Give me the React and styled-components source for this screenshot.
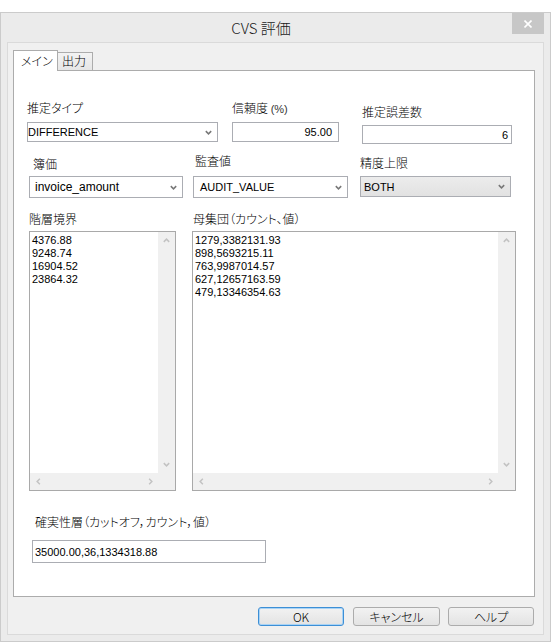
import React from 'react';
import styled, { createGlobalStyle } from 'styled-components';

const jp = `"Noto Sans CJK JP", "Liberation Sans", sans-serif`;
const latin = `"Liberation Sans", "Noto Sans CJK JP", sans-serif`;

const Global = createGlobalStyle`
  html, body { margin: 0; padding: 0; background: #ffffff; }
  body { font-family: ${latin}; color: #000; }
  * { box-sizing: border-box; }
`;

const Window = styled.div`
  margin-top: 12px;
  width: 551px;
  height: 630px;
  border: 1px solid #cbcbcb;
  background: #ebebeb;
  display: flex;
  flex-direction: column;
`;

const TitleBar = styled.div`
  height: 29px;
  display: flex;
  align-items: flex-start;
`;

const Title = styled.div`
  flex: 1;
  padding-left: 9px;
  text-align: center;
  font-family: ${jp};
  font-size: 15px;
  font-weight: 300;
  line-height: 29px;
  color: #1a1a1a;
`;

const CloseButton = styled.div`
  width: 32px;
  height: 21px;
  margin-right: 6px;
  background: #c7c7c7;
  display: flex;
  align-items: center;
  justify-content: center;
`;

const Client = styled.div`
  margin: 0 6px;
  height: 593px;
  border: 1px solid #dadada;
  background: #f0f0f0;
  padding: 7px 0 8px 5px;
  display: flex;
  flex-direction: column;
`;

const TabStrip = styled.div`
  display: flex;
  align-items: flex-end;
  height: 20px;
`;

const Tab = styled.div`
  position: relative;
  z-index: ${(p) => (p.$active ? 1 : 0)};
  width: ${(p) => p.$w}px;
  height: ${(p) => (p.$active ? 21 : 18)}px;
  margin-bottom: ${(p) => (p.$active ? -1 : 0)}px;
  margin-left: ${(p) => (p.$active ? 0 : -1)}px;
  border: 1px solid #acacac;
  border-bottom: none;
  background: ${(p) => (p.$active ? '#ffffff' : 'linear-gradient(#f3f3f3, #e6e6e6)')};
  font-family: ${jp};
  font-size: 12px;
  font-weight: 300;
  font-feature-settings: "palt";
  line-height: ${(p) => (p.$active ? 19 : 16)}px;
  padding-left: ${(p) => p.$pl}px;
  white-space: nowrap;
`;

const Pane = styled.div`
  width: 522px;
  height: 527px;
  border: 1px solid #acacac;
  background: #ffffff;
  padding-top: 29px;
  display: flex;
  flex-direction: column;
`;

const Row = styled.div`
  display: flex;
  align-items: flex-start;
  margin-top: ${(p) => p.$mt || 0}px;
`;

const Field = styled.div`
  display: flex;
  flex-direction: column;
  width: ${(p) => p.$w}px;
  margin-left: ${(p) => p.$ml}px;
  margin-top: ${(p) => p.$mt || 0}px;
`;

const Label = styled.div`
  height: 16px;
  line-height: 16px;
  padding-left: ${(p) => p.$dx || 0}px;
  margin-bottom: ${(p) => p.$gap}px;
  font-family: ${jp};
  font-size: 12px;
  font-weight: 300;
  font-feature-settings: "palt";
  white-space: nowrap;
`;

const Small = styled.span`
  font-family: ${latin};
  font-size: 11px;
  font-weight: 400;
  color: #333;
`;

const SelectBox = styled.div`
  height: ${(p) => p.$h}px;
  border: 1px solid #abadb3;
  background: ${(p) => (p.$flat ? 'linear-gradient(#ececec, #e2e2e2)' : '#ffffff')};
  display: flex;
  align-items: center;
  justify-content: space-between;
  padding: 0 5px 0 ${(p) => p.$pl}px;
  font-family: ${latin};
  font-size: ${(p) => p.$fs}px;
  white-space: nowrap;
`;

const Input = styled.div`
  height: ${(p) => p.$h}px;
  border: 1px solid #abadb3;
  background: #ffffff;
  display: flex;
  align-items: center;
  justify-content: ${(p) => (p.$right ? 'flex-end' : 'flex-start')};
  padding: 0 ${(p) => p.$pr || 0}px 0 ${(p) => p.$pl || 0}px;
  font-family: ${latin};
  font-size: 11px;
  white-space: nowrap;
`;

const ListBox = styled.div`
  height: 260px;
  border: 1px solid #a9a9a9;
  background: #ffffff;
  display: grid;
  grid-template-columns: 1fr 17px;
  grid-template-rows: 1fr 17px;
`;

const ListContent = styled.div`
  padding: 2px 2px;
  font-family: ${latin};
  font-size: 11px;
  line-height: 13px;
  overflow: hidden;
`;

const VScroll = styled.div`
  background: #f0f0f0;
  display: flex;
  flex-direction: column;
  justify-content: space-between;
  align-items: center;
  padding: 6px 0 6px;
`;

const HScroll = styled.div`
  background: #f0f0f0;
  display: flex;
  justify-content: space-between;
  align-items: center;
  padding: 0 5px 0 6px;
`;

const Corner = styled.div`
  background: #f0f0f0;
`;

const ButtonRow = styled.div`
  display: flex;
  justify-content: flex-end;
  margin-top: 10px;
  padding-right: 9px;
`;

const Button = styled.div`
  width: ${(p) => p.$w}px;
  height: 19px;
  margin-left: ${(p) => p.$ml}px;
  border: 1px solid ${(p) => (p.$default ? '#3c8fd6' : '#acacac')};
  border-radius: 3px;
  box-shadow: ${(p) => (p.$default ? 'inset 0 0 0 1px #a9d3f5' : 'none')};
  background: linear-gradient(#f2f2f2, #e3e3e3);
  display: flex;
  align-items: center;
  justify-content: center;
  font-family: ${jp};
  font-size: 12px;
  font-weight: 300;
  font-feature-settings: "palt";
  line-height: 16px;
`;

const Chevron = ({ dir = 'down', color = '#707070' }) => {
  const pts = {
    down: '0.8,0.8 3.5,3.5 6.2,0.8',
    up: '0.8,3.5 3.5,0.8 6.2,3.5',
    left: '3.5,0.8 0.8,3.5 3.5,6.2',
    right: '0.8,0.8 3.5,3.5 0.8,6.2',
  }[dir];
  const vertical = dir === 'down' || dir === 'up';
  return (
    <svg
      width={vertical ? 7 : 5}
      height={vertical ? 5 : 7}
      viewBox={vertical ? '0 0 7 4.3' : '0 0 4.3 7'}
      style={{ display: 'block' }}
    >
      <polyline points={pts} fill="none" stroke={color} strokeWidth="1.5" />
    </svg>
  );
};

const Select = ({ value, h, pl, fs, flat }) => (
  <SelectBox $h={h} $pl={pl} $fs={fs} $flat={flat}>
    <span>{value}</span>
    <Chevron dir="down" color="#777777" />
  </SelectBox>
);

const List = ({ items }) => (
  <ListBox>
    <ListContent>
      {items.map((t) => (
        <div key={t}>{t}</div>
      ))}
    </ListContent>
    <VScroll>
      <Chevron dir="up" color="#c3c3c3" />
      <Chevron dir="down" color="#c3c3c3" />
    </VScroll>
    <HScroll>
      <Chevron dir="left" color="#c3c3c3" />
      <Chevron dir="right" color="#c3c3c3" />
    </HScroll>
    <Corner />
  </ListBox>
);

export default function App() {
  return (
    <>
      <Global />
      <Window>
        <TitleBar>
          <Title>CVS 評価</Title>
          <CloseButton>
            <svg width="8" height="8" viewBox="0 0 8 8" style={{ display: 'block' }}>
              <path d="M0.5 0.5 L7.5 7.5 M7.5 0.5 L0.5 7.5" stroke="#ffffff" strokeWidth="1.6" />
            </svg>
          </CloseButton>
        </TitleBar>
        <Client>
          <TabStrip>
            <Tab $active $w={45} $pl={7}>メイン</Tab>
            <Tab $w={36} $pl={4}>出力</Tab>
          </TabStrip>
          <Pane>
            <Row>
              <Field $w={191} $ml={13}>
                <Label $gap={6}>推定タイプ</Label>
                <Select value="DIFFERENCE" h={20} pl={0} fs={11} />
              </Field>
              <Field $w={107} $ml={14}>
                <Label $gap={6}>
                  信頼度 <Small>(%)</Small>
                </Label>
                <Input $h={20} $right $pr={6}>95.00</Input>
              </Field>
              <Field $w={150} $ml={23} $mt={4}>
                <Label $gap={5}>推定誤差数</Label>
                <Input $h={19} $right $pr={3}>6</Input>
              </Field>
            </Row>
            <Row $mt={9}>
              <Field $w={154} $ml={15} $mt={3}>
                <Label $gap={4} $dx={4}>簿価</Label>
                <Select value="invoice_amount" h={22} pl={5} fs={12} />
              </Field>
              <Field $w={155} $ml={10}>
                <Label $gap={7} $dx={2}>監査値</Label>
                <Select value="AUDIT_VALUE" h={22} pl={6} fs={11} />
              </Field>
              <Field $w={151} $ml={12} $mt={2}>
                <Label $gap={5}>精度上限</Label>
                <Select value="BOTH" h={21} pl={3} fs={11} flat />
              </Field>
            </Row>
            <Row $mt={13}>
              <Field $w={147} $ml={15}>
                <Label $gap={4}>階層境界</Label>
                <List items={['4376.88', '9248.74', '16904.52', '23864.32']} />
              </Field>
              <Field $w={324} $ml={16}>
                <Label $gap={4} $dx={1}>母集団（カウント、値）</Label>
                <List
                  items={[
                    '1279,3382131.93',
                    '898,5693215.11',
                    '763,9987014.57',
                    '627,12657163.59',
                    '479,13346354.63',
                  ]}
                />
              </Field>
            </Row>
            <Row $mt={23}>
              <Field $w={234} $ml={18}>
                <Label $gap={10} $dx={3}>確実性層（カットオフ，カウント，値）</Label>
                <Input $h={23} $pl={2}>35000.00,36,1334318.88</Input>
              </Field>
            </Row>
          </Pane>
          <ButtonRow>
            <Button $w={86} $ml={0} $default>OK</Button>
            <Button $w={87} $ml={9}>キャンセル</Button>
            <Button $w={86} $ml={8}>ヘルプ</Button>
          </ButtonRow>
        </Client>
      </Window>
    </>
  );
}
